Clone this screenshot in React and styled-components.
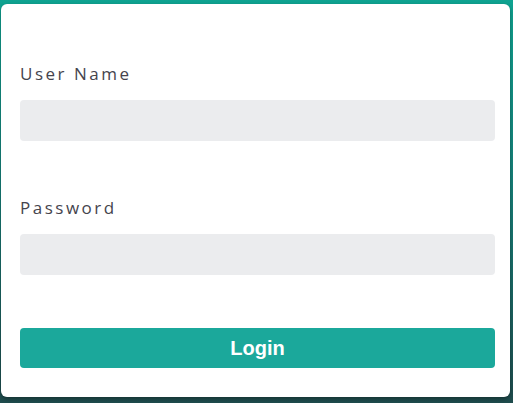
import React from "react";
import styled, { createGlobalStyle } from "styled-components";

const Global = createGlobalStyle`
  html, body { margin: 0; padding: 0; height: 100%; }
  body {
    background: linear-gradient(180deg, #0fa391 0%, #16817a 45%, #1f4c4d 100%);
    font-family: "Open Sans", "Liberation Sans", sans-serif;
  }
  #root { height: 100%; }
`;

const Page = styled.div`
  height: 403px;
  box-sizing: border-box;
  padding: 4px 3px 6px 1px;
  display: flex;
`;

const Card = styled.form`
  flex: 1;
  background: #fff;
  border-radius: 6px;
  box-shadow: 0 2px 4px rgba(0, 0, 0, 0.35);
  padding: 59px 15px 0 19px;
  display: flex;
  flex-direction: column;
`;

const Field = styled.div`
  display: flex;
  flex-direction: column;
  margin-bottom: ${(p) => p.$gap || 0}px;
`;

const Label = styled.label`
  font-family: "Open Sans", "Liberation Sans", sans-serif;
  font-size: 17px;
  line-height: 22px;
  letter-spacing: 2.5px;
  color: #45444d;
  margin-bottom: 15px;
`;

const Input = styled.input`
  height: 41px;
  border: none;
  border-radius: 4px;
  background: #ebecee;
  outline: none;
  padding: 0 12px;
  box-sizing: border-box;
`;

const Button = styled.button`
  height: 40px;
  border: none;
  border-radius: 4px;
  background: #1ba89b;
  color: #fff;
  font-family: "Liberation Sans", Arial, sans-serif;
  font-weight: bold;
  font-size: 20px;
  cursor: pointer;
`;

export default function App() {
  return (
    <>
      <Global />
      <Page>
        <Card onSubmit={(e) => e.preventDefault()}>
          <Field $gap={56}>
            <Label>User Name</Label>
            <Input type="text" />
          </Field>
          <Field $gap={53}>
            <Label>Password</Label>
            <Input type="password" />
          </Field>
          <Button type="submit">Login</Button>
        </Card>
      </Page>
    </>
  );
}
